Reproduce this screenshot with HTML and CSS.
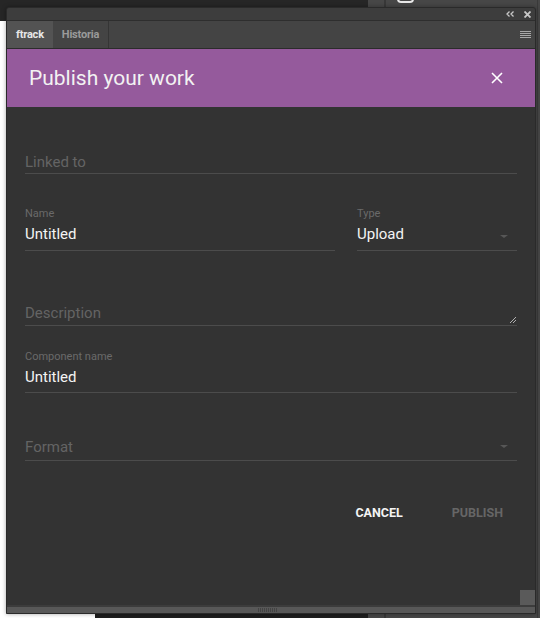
FILE: index.html
```html
<!DOCTYPE html>
<html>
<head>
<meta charset="utf-8">
<link rel="stylesheet" href="styles.css">
</head>
<body>
<div class="desk">
  <div class="bg-top"></div>
  <div class="bg-right"><span class="bg-icon"></span></div>
  <div class="bg-line"></div>
  <div class="bg-edge"></div>
  <div class="bg-bottom"></div>

  <div class="panel">
    <div class="titlebar">
      <svg class="ico-collapse" width="8" height="6" viewBox="0 0 8 6"><path d="M3.5 0.5 L1 3 L3.5 5.5 M7.5 0.5 L5 3 L7.5 5.5" fill="none" stroke="#c8c8c8" stroke-width="1.3"/></svg>
      <svg class="ico-close" width="7" height="7" viewBox="0 0 7 7"><path d="M0.5 0.5 L6.5 6.5 M6.5 0.5 L0.5 6.5" fill="none" stroke="#c8c8c8" stroke-width="1.8"/></svg>
    </div>
    <div class="tabs">
      <div class="tab tab-active">ftrack</div>
      <div class="tab">Historia</div>
      <div class="tab-spacer"></div>
      <svg class="ico-menu" width="11" height="7" viewBox="0 0 11 7"><path d="M0 0.5 H11 M0 2.5 H11 M0 4.5 H11 M0 6.5 H11" stroke="#a8a8a8" stroke-width="1"/></svg>
    </div>
    <div class="header">
      <h1 class="title">Publish your work</h1>
      <svg class="header-close" width="12" height="12" viewBox="0 0 12 12"><path d="M1 1 L11 11 M11 1 L1 11" stroke="#ffffff" stroke-width="1.6"/></svg>
    </div>
    <div class="content">
      <div class="field f-linked">
        <div class="input placeholder pad-1">Linked to</div>
      </div>
      <div class="row f-name">
        <div class="field col-name">
          <div class="label">Name</div>
          <div class="input value pad-6">Untitled</div>
        </div>
        <div class="field col-type">
          <div class="label">Type</div>
          <div class="input value pad-6 select">Upload<span class="arrow"></span></div>
        </div>
      </div>
      <div class="field f-desc">
        <div class="input placeholder pad-2 textarea">Description
          <svg class="grip" width="9" height="6" viewBox="0 0 9 6"><path d="M3 6 L9 0 M6 6 L9 3" stroke="#b0b0b0" stroke-width="1"/></svg>
        </div>
      </div>
      <div class="field f-comp">
        <div class="label">Component name</div>
        <div class="input value pad-5">Untitled</div>
      </div>
      <div class="field f-format">
        <div class="input placeholder pad-3 select">Format<span class="arrow"></span></div>
      </div>
      <div class="actions">
        <div class="btn btn-cancel">CANCEL</div>
        <div class="btn btn-publish">PUBLISH</div>
      </div>
      <div class="corner"></div>
    </div>
    <div class="hscroll">
      <div class="grip-h"></div>
    </div>
  </div>
</div>
</body>
</html>
```
FILE: styles.css
```css
* { box-sizing: border-box; }
html, body { margin: 0; padding: 0; }
body {
  width: 540px;
  height: 618px;
  overflow: hidden;
  background: #ffffff;
  font-family: Roboto, "Liberation Sans", sans-serif;
}
.desk {
  position: relative;
  width: 540px;
  height: 618px;
}
.bg-top {
  position: absolute;
  left: 0; top: 0;
  width: 368px; height: 21px;
  background: #262626;
}
.bg-right {
  position: absolute;
  left: 368px; top: 0;
  width: 172px; height: 618px;
  background: #474747;
}
.bg-icon {
  position: absolute;
  left: 29px; top: -6px;
  width: 17px; height: 9px;
  border: 2px solid #e8e8e8;
  border-radius: 4px;
}
.bg-line {
  position: absolute;
  left: 384px; top: 0;
  width: 2px; height: 618px;
  background: #383838;
}
.bg-edge {
  position: absolute;
  left: 537px; top: 0;
  width: 1px; height: 618px;
  background: #3a3a3a;
}
.bg-bottom {
  position: absolute;
  left: 95px; top: 613px;
  width: 273px; height: 5px;
  background: #1e1e1e;
}

.panel {
  position: absolute;
  left: 6px; top: 7px;
  width: 530px; height: 607px;
  border: 1px solid #2a2a2a;
  border-radius: 3px 3px 0 0;
  background: #333333;
  box-shadow: 0 0 4px rgba(0,0,0,0.35);
  display: flex;
  flex-direction: column;
  overflow: hidden;
}
.titlebar {
  height: 13px;
  flex: none;
  background: #3d3d3d;
  border-bottom: 1px solid #2e2e2e;
  display: flex;
  align-items: center;
  justify-content: flex-end;
  padding-right: 4px;
}
.ico-collapse { margin-right: 10px; }
.tabs {
  height: 28px;
  flex: none;
  background: #444444;
  border-bottom: 1px solid #2c2c2c;
  display: flex;
  align-items: stretch;
}
.tab {
  display: flex;
  align-items: center;
  padding: 0 9px;
  font-size: 11px;
  font-weight: 700;
  letter-spacing: -0.2px;
  color: #9a9a9a;
  border-right: 1px solid #353535;
}
.tab-active {
  background: #535353;
  color: #e6e6e6;
  border-right: 0;
  padding-right: 9px;
}
.tab-spacer { flex: 1; }
.ico-menu { align-self: center; margin-right: 4px; }

.header {
  height: 58px;
  flex: none;
  background: #955a9c;
  display: flex;
  align-items: center;
  padding-left: 22px;
  padding-right: 32px;
}
.title {
  margin: 0;
  flex: 1;
  font-size: 21px;
  font-weight: 400;
  line-height: 58px;
  color: #f2f2f2;
}
.header-close { flex: none; }

.content {
  flex: 1;
  position: relative;
  padding: 45px 18px 0 18px;
  background: #333333;
}
.field { position: relative; }
.label {
  font-size: 11px;
  line-height: 13px;
  color: #6a6a6a;
  margin-bottom: 4px;
}
.input {
  position: relative;
  font-size: 15px;
  line-height: 20px;
  border-bottom: 1px solid #4c4c4c;
}
.placeholder { color: #646464; }
.value { color: #f4f4f4; }
.pad-1 { padding-bottom: 1px; }
.pad-2 { padding-bottom: 2px; }
.pad-3 { padding-bottom: 3px; }
.pad-5 { padding-bottom: 5px; }
.pad-6 { padding-bottom: 6px; }

.row { display: flex; gap: 22px; }
.col-name { width: 310px; flex: none; }
.col-type { flex: 1; }

.f-name { margin-top: 33px; }
.f-desc { margin-top: 52px; }
.f-comp { margin-top: 24px; }
.f-format { margin-top: 44px; }

.arrow {
  position: absolute;
  right: 9px;
  bottom: 12px;
  width: 0; height: 0;
  border-left: 4px solid transparent;
  border-right: 4px solid transparent;
  border-top: 3px solid #575757;
}
.grip {
  position: absolute;
  right: 1px;
  bottom: 2px;
}

.actions {
  margin-top: 44px;
  display: flex;
  justify-content: flex-end;
  gap: 49px;
  padding-right: 14px;
}
.btn {
  font-size: 12.5px;
  line-height: 16px;
  font-weight: 700;
}
.btn-cancel { color: #f4f4f4; }
.btn-publish { color: #666666; }

.corner {
  position: absolute;
  right: 0; bottom: 0;
  width: 15px; height: 15px;
  background: #5a5a5a;
}
.hscroll {
  height: 8px;
  flex: none;
  border-top: 2px solid #3c3c3c;
  background: #585858;
  display: flex;
  justify-content: center;
  padding-top: 1px;
}
.grip-h {
  width: 19px;
  height: 4px;
  margin-left: -8px;
  background: repeating-linear-gradient(to right, #444 0, #444 1px, transparent 1px, transparent 2px);
}
```
